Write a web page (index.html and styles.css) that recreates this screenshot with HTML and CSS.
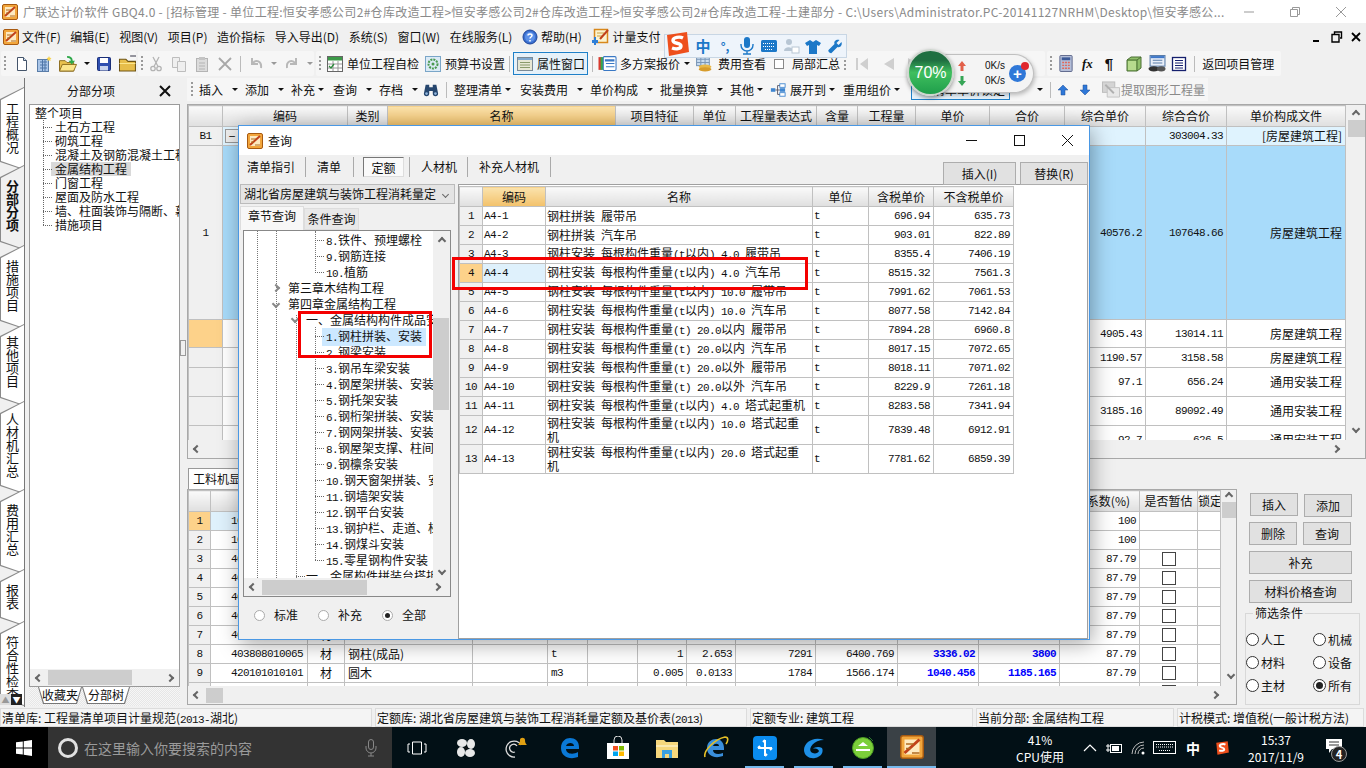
FILE: index.html
```html
<!DOCTYPE html>
<html lang="zh-CN">
<head>
<meta charset="utf-8">
<title>广联达计价软件 GBQ4.0</title>
<link rel="stylesheet" href="styles.css">
</head>
<body>
<svg class="sprite" aria-hidden="true">
  <symbol id="app" viewBox="0 0 16 16"><rect x=".5" y=".5" width="15" height="15" rx="1.5" fill="#f2a63c" stroke="#a85a10"/><rect x="3" y="3" width="10" height="10" fill="#fde9c0"/><path d="M3 12 13 3" stroke="#c1401a" stroke-width="2"/><path d="M4 6h5M4 9h3M8 12h5" stroke="#b06a20"/></symbol>
  <symbol id="doc" viewBox="0 0 16 16"><path d="M3.5 1.5h6l3 3v10h-9z" fill="#fff" stroke="#44546a"/><path d="M9.500 1.500v3h3" fill="#cfe0f2" stroke="#44546a"/></symbol>
  <symbol id="docs" viewBox="0 0 16 16"><rect x="1.500" y="3.500" width="11" height="12" fill="#a9c5e8" stroke="#5a7da8"/><path d="M4 6h7M4 9h7M4 12h7M6.500 4v11M9 4v11" stroke="#4f76a8"/><path d="M13 0l.8 1.700 1.700.3-1.200 1.200.3 1.800-1.600-.8-1.600.8.300-1.800-1.200-1.200 1.700-.3z" fill="#f7d24a"/></symbol>
  <symbol id="open" viewBox="0 0 20 18"><path d="M1 6h6l2 2h7v9H1z" fill="#e9c14e" stroke="#8a6a1c"/><path d="M1 17l3-7h15l-3 7z" fill="#fbe58c" stroke="#8a6a1c"/><path d="M9 1c4 0 6 2 6 5h2.500l-3.500 4-3.500-4H13c0-2-2-3-4-3z" fill="#2fa84a"/></symbol>
  <symbol id="save" viewBox="0 0 16 16"><rect x="1.500" y="1.500" width="13" height="13" rx="1" fill="#2f4fb0" stroke="#1a2f78"/><rect x="4" y="2" width="8" height="5" fill="#fff"/><rect x="4" y="10" width="8" height="4.500" fill="#c9d4ee"/></symbol>
  <symbol id="folder" viewBox="0 0 18 16"><path d="M1 4h6l2 2h7v9H1z" fill="#e7bd4a" stroke="#6e5414"/><path d="M11 1h6v5" fill="none" stroke="#334"/><path d="M1 8h15" stroke="#fbe58c"/></symbol>
  <symbol id="cut" viewBox="0 0 16 16"><g fill="none" stroke="#b4b4b4" stroke-width="1.300"><circle cx="5" cy="12.500" r="2.200"/><circle cx="11" cy="12.500" r="2.200"/><path d="M6 10.500 11 1M10 10.500 5 1"/></g></symbol>
  <symbol id="copy" viewBox="0 0 16 16"><g fill="#efefef" stroke="#bdbdbd"><path d="M1.500 1.500h7v10h-7z"/><path d="M6.500 5.500h8v10h-8z"/></g></symbol>
  <symbol id="paste" viewBox="0 0 16 16"><rect x="2.500" y="2.500" width="11" height="13" fill="#dcdcdc" stroke="#b4b4b4"/><rect x="5" y="1" width="6" height="3" fill="#c4c4c4"/><path d="M5 7h6M5 10h6M5 13h6" stroke="#b4b4b4"/></symbol>
  <symbol id="del" viewBox="0 0 16 16"><path d="M2 2l12 12M14 2 2 14" stroke="#a8a8a8" stroke-width="1.800"/></symbol>
  <symbol id="undo" viewBox="0 0 16 16"><path d="M4 2v6h6M4.500 7.500C8 3 14 5 13 12" fill="none" stroke="#b8b8b8" stroke-width="2"/></symbol>
  <symbol id="redo" viewBox="0 0 16 16"><path d="M12 2v6H6M11.500 7.500C8 3 2 5 3 12" fill="none" stroke="#b8b8b8" stroke-width="2"/></symbol>
  <symbol id="check" viewBox="0 0 16 16"><rect x=".5" y=".5" width="15" height="15" fill="#fff" stroke="#666"/><rect x="1" y="1" width="14" height="3.500" fill="#3c9a48"/><path d="M1 8h14M1 12h14M6 5v10M11 5v10" stroke="#999"/><path d="M2 10l2 2 3-4" stroke="#2a8a3a" fill="none" stroke-width="1.300"/></symbol>
  <symbol id="gear" viewBox="0 0 16 16"><rect x=".5" y=".5" width="15" height="15" fill="#dbeaf6" stroke="#7aa6c8"/><circle cx="8" cy="8" r="4.500" fill="none" stroke="#4a9a50" stroke-width="2" stroke-dasharray="2 1"/><circle cx="8" cy="8" r="1.500" fill="#4a9a50"/></symbol>
  <symbol id="prop" viewBox="0 0 16 16"><rect x=".5" y="1.500" width="15" height="13" fill="#e7e7d4" stroke="#7b8a96"/><rect x="1" y="2" width="14" height="2" fill="#7fa8cf"/><path d="M3 6.500h10M3 9h10M3 11.500h10" stroke="#8a9a6a"/></symbol>
  <symbol id="multi" viewBox="0 0 18 16"><rect x="1" y="2" width="3" height="12" fill="#d93a2e"/><rect x="3" y="2" width="3" height="12" fill="#37a84a"/><rect x="5.500" y="1.500" width="12" height="13" rx="1" fill="#fff" stroke="#3a78c4"/><path d="M7 5h9" stroke="#3a78c4" stroke-width="2"/><path d="M8 8h8M8 11h8" stroke="#3a78c4"/></symbol>
  <symbol id="fee" viewBox="0 0 18 16"><rect x="2" y="1" width="12" height="9" fill="#c9dcf0" stroke="#7c98b8"/><path d="M2 4h12M2 7h12M6 1v9M10 1v9" stroke="#7c98b8"/><ellipse cx="10" cy="11" rx="6" ry="2" fill="#e8b94a"/><ellipse cx="10" cy="13.500" rx="6" ry="2" fill="#d79c2c"/></symbol>
  <symbol id="help" viewBox="0 0 16 16"><circle cx="8" cy="8" r="7" fill="#3a6fd0" stroke="#1c449a"/><circle cx="8" cy="8" r="5" fill="#5c90e8"/><path d="M6 6.500C6 4.500 10 4.500 10 6.500 10 8 8 8 8 9.500M8 11v1.500" fill="none" stroke="#fff" stroke-width="1.500"/></symbol>
  <symbol id="pay" viewBox="0 0 18 18"><rect x="3.500" y="1.500" width="13" height="13" fill="#fbf3cf" stroke="#d8881c" stroke-width="1.500"/><path d="M6 5h7M6 8h6" stroke="#c9a040"/><path d="M9 11 17 2" stroke="#c1401a" stroke-width="2"/><path d="M1 12h6v3H1z" fill="#2f7fd8"/><path d="M4 9v8" stroke="#2f7fd8" stroke-width="2"/></symbol>
  <symbol id="binoc" viewBox="0 0 18 16"><path d="M3 2h4v3h4V2h4l2 10a3 3 0 0 1-6 0V9H7v3a3 3 0 0 1-6 0z" fill="#26466e"/><circle cx="4" cy="12" r="1.500" fill="#8fb4dc"/><circle cx="14" cy="12" r="1.500" fill="#8fb4dc"/></symbol>
  <symbol id="tree" viewBox="0 0 18 16"><rect x="1" y="6" width="5" height="4" fill="#3f86d0"/><rect x="11" y="1" width="6" height="4" fill="#fff" stroke="#3f86d0"/><rect x="11" y="6" width="6" height="4" fill="#3f86d0"/><rect x="11" y="11" width="6" height="4" fill="#fff" stroke="#3f86d0"/><path d="M6 8h5M8.500 3v10h2.500M8.500 3h2.500" fill="none" stroke="#556"/></symbol>
  <symbol id="up" viewBox="0 0 12 12"><path d="M6 1 11 6H8v5H4V6H1z" fill="#2f78d8" stroke="#1c4c96" stroke-width=".5"/></symbol>
  <symbol id="down" viewBox="0 0 12 12"><path d="M6 11 11 6H8V1H4v5H1z" fill="#2f78d8" stroke="#1c4c96" stroke-width=".5"/></symbol>
  <symbol id="extract" viewBox="0 0 20 18"><rect x="1" y="1" width="13" height="11" fill="#d4d4d4" stroke="#bbb"/><path d="M6 7h13v10H6z" fill="#e8e8e8" stroke="#c4c4c4"/><path d="M4 4l9 9" stroke="#b0b0b0" stroke-width="2"/></symbol>
  <symbol id="calc" viewBox="0 0 14 18"><rect x=".5" y=".5" width="13" height="17" rx="1" fill="#b4bed8" stroke="#5a6488"/><rect x="2.500" y="2.500" width="9" height="3" fill="#3d5a98"/><path d="M3 8h2M6 8h2M9 8h2M3 11h2M6 11h2M9 11h2M3 14h2M6 14h2M9 14h2" stroke="#e0685a" stroke-width="1.500"/></symbol>
  <symbol id="cube" viewBox="0 0 16 16"><path d="M1 4l4-3h10v11l-4 3H1z" fill="#8fbf6a" stroke="#4b6f33"/><path d="M1 4h10v11M11 4l4-3" fill="none" stroke="#4b6f33"/><rect x="2" y="5" width="8" height="9" fill="#b7db8e"/></symbol>
  <symbol id="screen" viewBox="0 0 18 16"><rect x="2.500" y=".5" width="14" height="10" fill="#e8eef8" stroke="#5a7da8"/><rect x="3" y="1" width="13" height="2" fill="#3f78c8"/><path d="M5 5h9M5 7.500h9" stroke="#5a7da8"/><ellipse cx="6" cy="13" rx="5" ry="2.500" fill="#333"/><ellipse cx="13" cy="13" rx="4" ry="2.500" fill="#555"/></symbol>
  <symbol id="list" viewBox="0 0 16 16"><rect x="1.500" y="1.500" width="13" height="13" fill="#fff" stroke="#16206e" stroke-width="1.300"/><path d="M4 4.500h8M4 7h8M4 9.500h8M4 12h8" stroke="#16206e"/></symbol>
  <symbol id="sogou" viewBox="0 0 28 28"><path d="M4 5 24 2l2 20-20 4z" fill="#ee4f1c"/><path d="M20 8c-3-1.500-10-1-10 2.500 0 3.500 8 2 8 5.500 0 3-5 3.500-9 2" fill="none" stroke="#fff" stroke-width="3.400"/></symbol>
  <symbol id="win" viewBox="0 0 16 16"><path d="M0 2.300 6.800 1.400V7.600H0zM7.700 1.300 16 0V7.600H7.700zM0 8.400H6.800V14.600L0 13.700zM7.700 8.400H16V16L7.700 14.800z" fill="#fff"/></symbol>
</svg>

<div class="app">
  <header class="titlebar">
    <svg class="ic16"><use href="#app"/></svg>
    <div class="title-text">广联达计价软件 GBQ4.0 - [招标管理 - 单位工程:恒安孝感公司2#仓库改造工程&gt;恒安孝感公司2#仓库改造工程&gt;恒安孝感公司2#仓库改造工程-土建部分 - C:\Users\Administrator.PC-20141127NRHM\Desktop\恒安孝感公...</div>
    <div class="wincaps">
      <svg width="12" height="12" viewBox="0 0 12 12"><path d="M1 6h10" stroke="#999"/></svg>
      <svg width="12" height="12" viewBox="0 0 12 12"><path d="M3.500 3V1.500h7v7H9M1.500 3.500h7v7h-7z" fill="none" stroke="#999"/></svg>
      <svg width="12" height="12" viewBox="0 0 12 12"><path d="M1 1l10 10M11 1 1 11" stroke="#999"/></svg>
    </div>
  </header>

  <nav class="menubar">
    <svg class="ic16 menu-logo"><use href="#app"/></svg>
    <span class="mi">文件(F)</span><span class="mi">编辑(E)</span><span class="mi">视图(V)</span><span class="mi">项目(P)</span><span class="mi">造价指标</span><span class="mi">导入导出(D)</span><span class="mi">系统(S)</span><span class="mi">窗口(W)</span><span class="mi">在线服务(L)</span>
    <svg class="ic16"><use href="#help"/></svg><span class="mi">帮助(H)</span>
    <svg class="ic18"><use href="#pay"/></svg><span class="mi">计量支付</span>
    <div class="mdi-caps">
      <svg width="12" height="12" viewBox="0 0 12 12"><path d="M1 10h6" stroke="#000" stroke-width="2"/></svg>
      <svg width="12" height="12" viewBox="0 0 12 12"><path d="M3.500 3V1h7v6H9M1 3.500h7V11H1z" fill="none" stroke="#000" stroke-width="1.400"/></svg>
      <svg width="12" height="12" viewBox="0 0 12 12"><path d="M2 2l8 8M10 2l-8 8" stroke="#000" stroke-width="1.800"/></svg>
    </div>
  </nav>

  <div class="toolbar1">
    <div class="seg seg-a"><i class="grip"></i>
      <svg class="ic16"><use href="#doc"/></svg><svg class="ic16"><use href="#docs"/></svg><svg class="ic-open"><use href="#open"/></svg><i class="caret"></i><svg class="ic16"><use href="#save"/></svg><svg class="ic-open"><use href="#folder"/></svg>
    </div>
    <div class="seg seg-b"><i class="grip"></i>
      <svg class="ic16"><use href="#cut"/></svg><svg class="ic16"><use href="#copy"/></svg><svg class="ic16"><use href="#paste"/></svg><svg class="ic16"><use href="#del"/></svg><i class="sep"></i><svg class="ic16"><use href="#undo"/></svg><i class="caret gray"></i><svg class="ic16"><use href="#redo"/></svg><i class="caret gray"></i>
    </div>
    <div class="seg seg-c"><i class="grip"></i>
      <svg class="ic16"><use href="#check"/></svg><span class="t">单位工程自检</span>
      <svg class="ic16 gear"><use href="#gear"/></svg><span class="t">预算书设置</span><i class="sep"></i>
      <span class="prop-on"><svg class="ic16"><use href="#prop"/></svg><span class="t">属性窗口</span></span><i class="sep"></i>
      <svg class="ic-open multi"><use href="#multi"/></svg><span class="t">多方案报价</span><i class="caret"></i>
      <svg class="ic-open"><use href="#fee"/></svg><span class="t">费用查看</span><i class="cb-mini"></i><span class="t">局部汇总</span><i class="grip"></i>
      <svg class="navs" width="66" height="14" viewBox="0 0 66 14"><path d="M2 1h2v12H2zM14 1v12L6 7zM40 1v12L30 7zM54 1v12l10-6z" fill="#cfcfcf"/></svg>
    </div>
    <div class="seg seg-d"><i class="grip"></i>
      <svg class="ic-calc"><use href="#calc"/></svg><span class="fx">fx</span><span class="pil">¶</span><svg class="ic16"><use href="#cube"/></svg><svg class="ic-open screen"><use href="#screen"/></svg><svg class="ic16 lst"><use href="#list"/></svg><i class="sep"></i><span class="t back">返回项目管理</span>
    </div>
  </div>

  <div class="main">
    <div class="rail">
      <div class="vtab h83"><span>工程概况</span></div>
      <div class="vtab h85 on"><span>分部分项</span></div>
      <div class="vtab h84"><span>措施项目</span></div>
      <div class="vtab h82 p12"><span>其他项目</span></div>
      <div class="vtab h93 p12"><span>人材机汇总</span></div>
      <div class="vtab h85"><span>费用汇总</span></div>
      <div class="vtab h57"><span>报表</span></div>
      <div class="vtab h85"><span>符合性检查</span></div>
      <div class="rail-arrows"><b class="ra off">▲</b><b class="ra">▼</b></div>
    </div>

    <aside class="side">
      <div class="side-head"><span>分部分项</span><svg width="12" height="12" viewBox="0 0 12 12"><path d="M1 1l10 10M11 1 1 11" stroke="#111" stroke-width="2"/></svg></div>
      <div class="side-box">
        <div class="side-tree">
          <div class="st root">整个项目</div>
          <div class="st">土石方工程</div>
          <div class="st">砌筑工程</div>
          <div class="st">混凝土及钢筋混凝土工程</div>
          <div class="st"><span class="st-sel">金属结构工程</span></div>
          <div class="st">门窗工程</div>
          <div class="st">屋面及防水工程</div>
          <div class="st">墙、柱面装饰与隔断、幕墙工程</div>
          <div class="st">措施项目</div>
        </div>
        <div class="hs side-hs"><i class="chev l"></i><i class="thumb th-side"></i><i class="chev r"></i></div>
      </div>
      <div class="side-tabs"><span class="stab s44"><span>收藏夹</span></span><span class="stab s48"><span>分部树</span></span></div>
    </aside>

    <div class="splitter"><i></i></div>

    <div class="work">
      <div class="toolbar2"><i class="grip"></i>
        <span class="ti w46">插入<i class="caret"></i></span><span class="ti w46">添加<i class="caret"></i></span><span class="ti w42 tight">补充<i class="caret"></i></span><span class="ti w46">查询<i class="caret"></i></span><span class="ti w44">存档<i class="caret"></i></span>
        <svg class="ic16"><use href="#binoc"/></svg><i class="sep sep2"></i>
        <span class="ti w66 tight">整理清单<i class="caret"></i></span><span class="ti w70">安装费用<i class="caret"></i></span><span class="ti w70">单价构成<i class="caret"></i></span><span class="ti w70">批量换算<i class="caret"></i></span><span class="ti w40 tight">其他<i class="caret"></i></span>
        <svg class="ic16 treeic"><use href="#tree"/></svg><span class="ti w53 tight">展开到<i class="caret"></i></span><span class="ti w68 tight">重用组价<i class="caret"></i></span>
        <span class="lockbox">清单单价锁定</span><i class="caret c-wide"></i><i class="sep"></i>
        <svg class="ic-arrow"><use href="#up"/></svg><svg class="ic-arrow"><use href="#down"/></svg>
        <svg class="ic-open"><use href="#extract"/></svg><span class="t gray-t">提取图形工程量</span>
      </div>

      <div class="upper">
        <div class="grid-area">
          <table class="grid g-main">
            <colgroup><col class="c34"><col class="c125"><col class="c40"><col class="c228"><col class="c78"><col class="c42"><col class="c81"><col class="c41"><col class="c58"><col class="c74"><col class="c75"><col class="c81"><col class="c81"><col class="c119"></colgroup>
            <thead><tr><th></th><th>编码</th><th>类别</th><th class="hot">名称</th><th>项目特征</th><th>单位</th><th>工程量表达式</th><th>含量</th><th>工程量</th><th>单价</th><th>合价</th><th>综合单价</th><th>综合合价</th><th>单价构成文件</th></tr></thead>
            <tbody>
              <tr class="r19 tint"><td class="rh n">B1</td><td class="nw"><i class="pm">−</i></td><td></td><td></td><td></td><td></td><td></td><td></td><td></td><td></td><td></td><td></td><td class="n ra-t">303004.33</td><td class="ra-t">[房屋建筑工程]</td></tr>
              <tr class="r174 sel"><td class="rh n">1</td><td></td><td></td><td></td><td></td><td></td><td></td><td></td><td></td><td></td><td></td><td class="n ra-t">40576.2</td><td class="n ra-t">107648.66</td><td class="ra-t">房屋建筑工程</td></tr>
              <tr class="r28"><td class="rh hotrow"></td><td></td><td></td><td></td><td></td><td></td><td></td><td></td><td></td><td></td><td></td><td class="n ra-t">4905.43</td><td class="n ra-t">13014.11</td><td class="ra-t">房屋建筑工程</td></tr>
              <tr class="r20"><td class="rh"></td><td></td><td></td><td></td><td></td><td></td><td></td><td></td><td></td><td></td><td></td><td class="n ra-t">1190.57</td><td class="n ra-t">3158.58</td><td class="ra-t">房屋建筑工程</td></tr>
              <tr class="r29"><td class="rh"></td><td></td><td></td><td></td><td></td><td></td><td></td><td></td><td></td><td></td><td></td><td class="n ra-t">97.1</td><td class="n ra-t">656.24</td><td class="ra-t">通用安装工程</td></tr>
              <tr class="r29"><td class="rh"></td><td></td><td></td><td></td><td></td><td></td><td></td><td></td><td></td><td></td><td></td><td class="n ra-t">3185.16</td><td class="n ra-t">89092.49</td><td class="ra-t">通用安装工程</td></tr>
              <tr class="r29"><td class="rh"></td><td></td><td></td><td></td><td></td><td></td><td></td><td></td><td></td><td></td><td></td><td class="n ra-t">92.7</td><td class="n ra-t">626.5</td><td class="ra-t">通用安装工程</td></tr>
            </tbody>
          </table>
          <div class="vs vs-main"><i class="chev u"></i><i class="thumb th-main"></i><i class="chev d"></i></div>
        </div>
        <div class="hs main-hs"><i class="chev l"></i><i class="chev r"></i></div>
      </div>

      <div class="lower-tabs"><span class="ltab">工料机显示</span></div>

      <div class="lower">
        <div class="lower-box">
          <div class="grid-area lower-area">
            <table class="grid g-low">
              <colgroup><col class="c22"><col class="c97"><col class="c37"><col class="c128"><col class="c75"><col class="c40"><col class="c50"><col class="c49"><col class="c49"><col class="c80"><col class="c82"><col class="c81"><col class="c81"><col class="c80"><col class="c58"><col class="c23"></colgroup>
              <thead><tr><th></th><th></th><th></th><th></th><th></th><th></th><th></th><th></th><th></th><th></th><th></th><th></th><th></th><th class="ra-h">系数(%)</th><th>是否暂估</th><th class="clip">锁定</th></tr></thead>
              <tbody>
                <tr class="low"><td class="rh hotrow n">1</td><td class="code n tintcell">10</td><td></td><td></td><td></td><td></td><td></td><td></td><td></td><td></td><td></td><td></td><td></td><td class="n ra-t">100</td><td></td><td></td></tr>
                <tr class="low"><td class="rh n">2</td><td class="code n">10</td><td></td><td></td><td></td><td></td><td></td><td></td><td></td><td></td><td></td><td></td><td></td><td class="n ra-t">100</td><td></td><td></td></tr>
                <tr class="low"><td class="rh n">3</td><td class="code n">40</td><td></td><td></td><td></td><td></td><td></td><td></td><td></td><td></td><td></td><td></td><td></td><td class="n ra-t">87.79</td><td class="ct"><i class="cb"></i></td><td></td></tr>
                <tr class="low"><td class="rh n">4</td><td class="code n">40</td><td></td><td></td><td></td><td></td><td></td><td></td><td></td><td></td><td></td><td></td><td></td><td class="n ra-t">87.79</td><td class="ct"><i class="cb"></i></td><td></td></tr>
                <tr class="low"><td class="rh n">5</td><td class="code n">40</td><td></td><td></td><td></td><td></td><td></td><td></td><td></td><td></td><td></td><td></td><td></td><td class="n ra-t">87.79</td><td class="ct"><i class="cb"></i></td><td></td></tr>
                <tr class="low"><td class="rh n">6</td><td class="code n">40</td><td></td><td></td><td></td><td></td><td></td><td></td><td></td><td></td><td></td><td></td><td></td><td class="n ra-t">87.79</td><td class="ct"><i class="cb"></i></td><td></td></tr>
                <tr class="low"><td class="rh n">7</td><td class="code n">40</td><td class="ct">材</td><td></td><td></td><td></td><td></td><td></td><td></td><td></td><td></td><td></td><td></td><td class="n ra-t">87.79</td><td class="ct"><i class="cb"></i></td><td></td></tr>
                <tr class="low"><td class="rh n">8</td><td class="code n">403808010065</td><td class="ct">材</td><td>钢柱(成品)</td><td></td><td class="n">t</td><td></td><td class="n ra-t">1</td><td class="n ra-t">2.653</td><td class="n ra-t">7291</td><td class="n ra-t">6400.769</td><td class="n ra-t blue">3336.02</td><td class="n ra-t blue">3800</td><td class="n ra-t">87.79</td><td class="ct"><i class="cb"></i></td><td></td></tr>
                <tr class="low"><td class="rh n">9</td><td class="code n">420101010101</td><td class="ct">材</td><td>圆木</td><td></td><td class="n">m3</td><td></td><td class="n ra-t">0.005</td><td class="n ra-t">0.0133</td><td class="n ra-t">1784</td><td class="n ra-t">1566.174</td><td class="n ra-t blue">1040.456</td><td class="n ra-t blue">1185.165</td><td class="n ra-t">87.79</td><td class="ct"><i class="cb"></i></td><td></td></tr>
                <tr class="low"><td class="rh"></td><td></td><td class="ct">材</td><td>混凝土</td><td></td><td></td><td></td><td></td><td></td><td></td><td></td><td></td><td></td><td></td><td class="ct"><i class="cb"></i></td><td></td></tr>
              </tbody>
            </table>
            <div class="vs vs-low"><i class="chev u"></i><i class="thumb th-low"></i><i class="chev d"></i></div>
          </div>
          <div class="hs low-hs"><i class="chev l"></i><i class="thumb th-lowh"></i><i class="chev r"></i></div>
        </div>

        <div class="actions">
          <div class="btn-row first"><button class="btn half">插入</button><button class="btn half">添加</button></div>
          <div class="btn-row"><button class="btn half">删除</button><button class="btn half">查询</button></div>
          <button class="btn wide">补充</button>
          <button class="btn wide">材料价格查询</button>
          <fieldset class="filter">
            <legend>筛选条件</legend>
            <label class="rad"><i class="dot"></i>人工</label><label class="rad"><i class="dot"></i>机械</label>
            <label class="rad"><i class="dot"></i>材料</label><label class="rad"><i class="dot"></i>设备</label>
            <label class="rad"><i class="dot"></i>主材</label><label class="rad"><i class="dot on"></i>所有</label>
          </fieldset>
        </div>
      </div>
    </div>
  </div>

  <footer class="status">
    <div class="sc s1">清单库: 工程量清单项目计量规范(<span class="n">2013-</span>湖北)</div>
    <div class="sc s2">定额库: 湖北省房屋建筑与装饰工程消耗量定额及基价表(<span class="n">2013</span>)</div>
    <div class="sc s3">定额专业: 建筑工程</div>
    <div class="sc s4">当前分部: 金属结构工程</div>
    <div class="sc s5">计税模式: 增值税(一般计税方法)</div>
  </footer>

  <div class="taskbar">
    <div class="start"><svg width="16" height="16"><use href="#win"/></svg></div>
    <div class="search"><i class="cortana"></i><span class="search-t">在这里输入你要搜索的内容</span>
      <svg class="mic" width="12" height="18" viewBox="0 0 12 18"><rect x="3.500" y=".5" width="5" height="10" rx="2.500" fill="none" stroke="#888"/><path d="M1 7v2a5 5 0 0 0 10 0V7M6 14v3M3 17h6" fill="none" stroke="#888"/></svg>
    </div>
    <div class="tk"><svg width="20" height="14" viewBox="0 0 20 14"><path d="M5.500 1h9v12h-9zM3 3H1v8h2M17 3h2v8h-2" fill="none" stroke="#fff"/></svg></div>
    <div class="tk"><svg width="22" height="22" viewBox="0 0 22 22"><g fill="#e8e8e8"><ellipse cx="7" cy="6" rx="5" ry="4"/><ellipse cx="16" cy="7" rx="4" ry="5"/><ellipse cx="15" cy="16" rx="5" ry="4"/><ellipse cx="6" cy="15" rx="4" ry="5"/></g><circle cx="11" cy="11" r="1.500" fill="#111"/></svg></div>
    <div class="tk"><svg width="28" height="26" viewBox="0 0 28 26"><path d="M20 10A8 8 0 1 0 14 22M16 11a4 4 0 1 0-2 6" fill="none" stroke="#ddd" stroke-width="1.300"/><path d="M19 5c0-3 5-3 5 0 0 3 1 4 2 5H17c1-1 2-2 2-5z" fill="#e0a012"/></svg></div>
    <div class="tk gap5"><svg width="22" height="22" viewBox="0 0 22 22"><path d="M3 11C3 4 8 1 12 1c5 0 9 3 9 9v2H8c0 5 7 6 12 3v5c-8 3-17 0-17-9zm5-2h8c0-4-7-4-8 0z" fill="#0a78d6"/></svg></div>
    <div class="tk"><svg width="24" height="24" viewBox="0 0 24 24"><path d="M1 7h22v16H1z" fill="#fff"/><path d="M8 7V4a4 4 0 0 1 8 0v3" fill="none" stroke="#ddd"/><rect x="7" y="10" width="5" height="4.500" fill="#f25022"/><rect x="13" y="10" width="5" height="4.500" fill="#7fba00"/><rect x="7" y="15.500" width="5" height="4.500" fill="#00a4ef"/><rect x="13" y="15.500" width="5" height="4.500" fill="#ffb900"/></svg></div>
    <div class="tk"><svg width="24" height="22" viewBox="0 0 24 22"><path d="M1 3h8l2 2h12v16H1z" fill="#f6d77c"/><path d="M1 8h22v2H1z" fill="#fbe9b0"/><path d="M7 13h10v8h-3v-4h-4v4H7z" fill="#3aa0e0"/></svg></div>
    <div class="tk"><svg width="26" height="26" viewBox="0 0 26 26"><path d="M4 13C4 7 9 4 13 4c5 0 8 4 8 9v2H10c0 4 5 5 10 3v3c-8 3-16 0-16-8zm6-2h6c0-3-5-3-6 0z" fill="#3a8fdc"/><path d="M2 22C0 16 12 4 22 2c4 0 3 4 1 7" fill="none" stroke="#e6c027" stroke-width="1.600"/></svg></div>
    <div class="tk run"><svg width="24" height="24" viewBox="0 0 24 24"><rect width="24" height="24" rx="4" fill="#0a8cf0"/><path d="M12 4v16M5 12h14M12 4l-2 2M12 20l2-2M5 12l2-2M19 12l-2 2" stroke="#fff" stroke-width="2" fill="none"/></svg></div>
    <div class="tk run"><svg width="24" height="24" viewBox="0 0 24 24"><path d="M22 4C12 0 2 6 2 14c0 6 6 9 11 8 6-1 9-6 7-10-3-2-8-1-9 1 3-1 5 0 6 2-1 3-6 3-8 1-3-4 3-12 13-12z" fill="#1e90e8"/></svg></div>
    <div class="tk run"><svg width="24" height="24" viewBox="0 0 24 24"><circle cx="12" cy="12" r="10.500" fill="#7ccf3a" stroke="#4a9a22"/><path d="M5 13h14v2H5zM7 10l5-4 5 4z" fill="#fff"/><path d="M18 1l4 4" stroke="#2a7a2a"/></svg></div>
    <div class="tk active"><svg width="24" height="24"><use href="#app"/></svg></div>
    <div class="tray">
      <div class="cpu"><span>41%</span><span>CPU使用</span></div>
      <svg width="14" height="8" viewBox="0 0 14 8"><path d="M1 7l6-6 6 6" fill="none" stroke="#fff" stroke-width="1.200"/></svg>
      <svg width="18" height="12" viewBox="0 0 18 12"><rect x="5.500" y="2.500" width="11" height="8" fill="none" stroke="#fff"/><rect x="7" y="4" width="7" height="5" fill="#fff"/><path d="M1 4h4M1 8h4M3 2v8" stroke="#fff"/></svg>
      <svg width="14" height="14" viewBox="0 0 14 14"><path d="M1 13a12 12 0 0 1 12-12M4 13a9 9 0 0 1 9-9M7 13a6 6 0 0 1 6-6" fill="none" stroke="#bbb"/><circle cx="12" cy="12" r="1.500" fill="#fff"/></svg>
      <svg width="23" height="13" viewBox="0 0 23 13"><rect x=".5" y=".5" width="22" height="12" fill="none" stroke="#fff"/><path d="M3 3.500h17M3 6h17M6 9.500h11" stroke="#fff" stroke-dasharray="1 1"/></svg>
      <span class="tray-zh">中</span>
      <svg class="tray-s" width="16" height="16"><use href="#sogou"/></svg>
      <div class="clock"><span>15:37</span><span>2017/11/9</span></div>
      <div class="notif"><svg width="18" height="16" viewBox="0 0 18 16"><path d="M1 1h16v10H7l-3 4v-4H1z" fill="#fff"/><path d="M4 4h10M4 7h10" stroke="#333"/></svg><b class="badge">4</b></div>
    </div>
  </div>
</div>

<!-- floating IME bar -->
<div class="ime">
  <svg class="ime-s" width="28" height="28"><use href="#sogou"/></svg>
  <span class="ime-zh">中</span>
  <span class="ime-pt">°,</span>
  <svg width="14" height="18" viewBox="0 0 14 18"><rect x="4" y="0" width="6" height="11" rx="3" fill="#1c78c8"/><path d="M1 7v1a6 6 0 0 0 12 0V7M7 14v3M3 17h8" fill="none" stroke="#1c78c8" stroke-width="1.400"/></svg>
  <svg width="16" height="12" viewBox="0 0 16 12"><rect width="16" height="12" rx="1.500" fill="#1c78c8"/><path d="M2 3.500h12M2 6.500h12M4 9.500h8" stroke="#fff" stroke-dasharray="1 1"/></svg>
  <svg width="16" height="16" viewBox="0 0 16 16"><circle cx="6" cy="4" r="3" fill="#b8c6d4"/><path d="M1 13c0-5 9-5 9 0z" fill="#b8c6d4"/><rect x="9" y="9" width="7" height="6" fill="#fff" stroke="#b8c6d4"/></svg>
  <svg width="16" height="15" viewBox="0 0 16 15"><path d="M5 1 0 4l2 3 2-1v9h8V6l2 1 2-3-5-3-3 2z" fill="#1c78c8"/></svg>
  <svg width="15" height="15" viewBox="0 0 15 15"><path d="M14 3l-3 3-2-2 3-3C9 0 6 2 7 5L1 11c-1 1 2 4 3 3l6-6c3 1 5-2 4-5z" fill="#1c78c8"/></svg>
</div>

<!-- floating network widget -->
<div class="meter">
  <div class="gauge"><span>70%</span></div>
  <div class="rates">
    <div class="rate"><svg width="10" height="12" viewBox="0 0 10 12"><path d="M5 1 9 6H6.500v5h-3V6H1z" fill="#e2604a"/></svg><span>0K/s</span></div>
    <div class="rate"><svg width="10" height="12" viewBox="0 0 10 12"><path d="M5 11 9 6H6.500V1h-3v5H1z" fill="#36a556"/></svg><span>0K/s</span></div>
  </div>
  <div class="plus">+<i class="reddot"></i></div>
</div>

<!-- query dialog -->
<section class="dialog">
  <div class="dlg-title">
    <svg class="ic16"><use href="#app"/></svg><span class="dlg-name">查询</span>
    <div class="dlg-caps">
      <svg width="11" height="11" viewBox="0 0 11 11"><path d="M0 5.500h11" stroke="#111"/></svg>
      <svg width="11" height="11" viewBox="0 0 11 11"><rect x=".5" y=".5" width="10" height="10" fill="none" stroke="#111"/></svg>
      <svg width="11" height="11" viewBox="0 0 11 11"><path d="M0 0l11 11M11 0 0 11" stroke="#111"/></svg>
    </div>
  </div>
  <div class="dlg-tabs">
    <span class="dt-t t-a">清单指引</span><span class="dt-t t-b">清单</span><span class="dt-t on">定额</span><span class="dt-t t-c">人材机</span><span class="dt-t t-d">补充人材机</span>
    <div class="dlg-btns"><button class="btn dbtn">插入(I)</button><button class="btn dbtn">替换(R)</button></div>
  </div>
  <div class="dlg-body">
    <div class="dlg-left">
      <div class="combo"><span>湖北省房屋建筑与装饰工程消耗量定</span><i class="chev d"></i></div>
      <div class="pagetabs"><span class="pt on">章节查询</span><span class="pt">条件查询</span></div>
      <div class="tree-box">
        <div class="tree-scroll">
          <div class="tree-list">
            <i class="vl v1"></i><i class="vl v2"></i><i class="vl v3"></i><i class="vl v4"></i><i class="vl v5"></i>
            <div class="dr leaf"><span class="n">8.</span>铁件、预埋螺栓</div>
            <div class="dr leaf"><span class="n">9.</span>钢筋连接</div>
            <div class="dr leaf"><span class="n">10.</span>植筋</div>
            <div class="dr chap"><i class="chev r tw"></i>第三章木结构工程</div>
            <div class="dr chap"><i class="chev d tw"></i>第四章金属结构工程</div>
            <div class="dr sec"><i class="chev d tw"></i>一、金属结构构件成品安装</div>
            <div class="dr leaf"><span class="picked"><span class="n">1.</span>钢柱拼装、安装</span></div>
            <div class="dr leaf"><span class="n">2.</span>钢梁安装</div>
            <div class="dr leaf"><span class="n">3.</span>钢吊车梁安装</div>
            <div class="dr leaf"><span class="n">4.</span>钢屋架拼装、安装</div>
            <div class="dr leaf"><span class="n">5.</span>钢托架安装</div>
            <div class="dr leaf"><span class="n">6.</span>钢桁架拼装、安装</div>
            <div class="dr leaf"><span class="n">7.</span>钢网架拼装、安装</div>
            <div class="dr leaf"><span class="n">8.</span>钢屋架支撑、柱间支撑</div>
            <div class="dr leaf"><span class="n">9.</span>钢檩条安装</div>
            <div class="dr leaf"><span class="n">10.</span>钢天窗架拼装、安装</div>
            <div class="dr leaf"><span class="n">11.</span>钢墙架安装</div>
            <div class="dr leaf"><span class="n">12.</span>钢平台安装</div>
            <div class="dr leaf"><span class="n">13.</span>钢护栏、走道、梯子</div>
            <div class="dr leaf"><span class="n">14.</span>钢煤斗安装</div>
            <div class="dr leaf"><span class="n">15.</span>零星钢构件安装</div>
            <div class="dr sec2">一、金属构件拼装台搭拆</div>
          </div>
          <div class="vs vs-tree"><i class="chev u"></i><i class="thumb th-tree"></i><i class="chev d"></i></div>
        </div>
        <div class="hs tree-hs"><i class="chev l"></i><i class="thumb th-treeh"></i><i class="chev r"></i></div>
      </div>
      <div class="dlg-radios">
        <label class="rad2"><i class="dot soft"></i>标准</label><label class="rad2"><i class="dot soft"></i>补充</label><label class="rad2"><i class="dot soft on"></i>全部</label>
      </div>
    </div>
    <div class="dlg-right">
      <table class="grid g-dlg">
        <colgroup><col class="c23"><col class="c63"><col class="c267"><col class="c56"><col class="c65"><col class="c80"></colgroup>
        <thead><tr><th></th><th class="hot">编码</th><th>名称</th><th>单位</th><th>含税单价</th><th>不含税单价</th></tr></thead>
        <tbody>
          <tr><td class="rh n">1</td><td class="n">A4-1</td><td>钢柱拼装 履带吊</td><td class="n">t</td><td class="n ra-t">696.94</td><td class="n ra-t">635.73</td></tr>
          <tr><td class="rh n">2</td><td class="n">A4-2</td><td>钢柱拼装 汽车吊</td><td class="n">t</td><td class="n ra-t">903.01</td><td class="n ra-t">822.89</td></tr>
          <tr><td class="rh n">3</td><td class="n">A4-3</td><td>钢柱安装 每根构件重量<span class="n">(t</span>以内<span class="n">) 4.0 </span>履带吊</td><td class="n">t</td><td class="n ra-t">8355.4</td><td class="n ra-t">7406.19</td></tr>
          <tr class="cur"><td class="rh hotrow n">4</td><td class="n tintcell">A4-4</td><td>钢柱安装 每根构件重量<span class="n">(t</span>以内<span class="n">) 4.0 </span>汽车吊</td><td class="n">t</td><td class="n ra-t">8515.32</td><td class="n ra-t">7561.3</td></tr>
          <tr><td class="rh n">5</td><td class="n">A4-5</td><td>钢柱安装 每根构件重量<span class="n">(t</span>以内<span class="n">) 10.0 </span>履带吊</td><td class="n">t</td><td class="n ra-t">7991.62</td><td class="n ra-t">7061.53</td></tr>
          <tr><td class="rh n">6</td><td class="n">A4-6</td><td>钢柱安装 每根构件重量<span class="n">(t</span>以内<span class="n">) 10.0 </span>汽车吊</td><td class="n">t</td><td class="n ra-t">8077.58</td><td class="n ra-t">7142.84</td></tr>
          <tr><td class="rh n">7</td><td class="n">A4-7</td><td>钢柱安装 每根构件重量<span class="n">(t) 20.0</span>以内 履带吊</td><td class="n">t</td><td class="n ra-t">7894.28</td><td class="n ra-t">6960.8</td></tr>
          <tr><td class="rh n">8</td><td class="n">A4-8</td><td>钢柱安装 每根构件重量<span class="n">(t) 20.0</span>以内 汽车吊</td><td class="n">t</td><td class="n ra-t">8017.15</td><td class="n ra-t">7072.65</td></tr>
          <tr><td class="rh n">9</td><td class="n">A4-9</td><td>钢柱安装 每根构件重量<span class="n">(t) 20.0</span>以外 履带吊</td><td class="n">t</td><td class="n ra-t">8018.11</td><td class="n ra-t">7071.02</td></tr>
          <tr><td class="rh n">10</td><td class="n">A4-10</td><td>钢柱安装 每根构件重量<span class="n">(t) 20.0</span>以外 汽车吊</td><td class="n">t</td><td class="n ra-t">8229.9</td><td class="n ra-t">7261.18</td></tr>
          <tr><td class="rh n">11</td><td class="n">A4-11</td><td>钢柱安装 每根构件重量<span class="n">(t</span>以内<span class="n">) 4.0 </span>塔式起重机</td><td class="n">t</td><td class="n ra-t">8283.58</td><td class="n ra-t">7341.94</td></tr>
          <tr class="tall"><td class="rh n">12</td><td class="n">A4-12</td><td class="wrap">钢柱安装 每根构件重量<span class="n">(t</span>以内<span class="n">) 10.0 </span>塔式起重机</td><td class="n">t</td><td class="n ra-t">7839.48</td><td class="n ra-t">6912.91</td></tr>
          <tr class="tall"><td class="rh n">13</td><td class="n">A4-13</td><td class="wrap">钢柱安装 每根构件重量<span class="n">(t</span>以内<span class="n">) 20.0 </span>塔式起重机</td><td class="n">t</td><td class="n ra-t">7781.62</td><td class="n ra-t">6859.39</td></tr>
        </tbody>
      </table>
    </div>
  </div>
</section>

<div class="redbox rb-tree"></div>
<div class="redbox rb-row"></div>
</body>
</html>
```
FILE: styles.css
```css
* { box-sizing: border-box; }
html, body { margin: 0; padding: 0; width: 1366px; height: 768px; overflow: hidden; }
body { position: relative; background: #f0f0f0; color: #111; font: 12px/16px "Noto Sans CJK SC", "Liberation Sans", sans-serif; }
i { font-style: normal; }
.sprite { position: absolute; width: 0; height: 0; }
.ic16 { width: 16px; height: 16px; flex: none; }
.ic18 { width: 18px; height: 18px; flex: none; }
.ic-open { width: 20px; height: 17px; flex: none; }
.ic-calc { width: 14px; height: 17px; flex: none; }
.ic-arrow { width: 12px; height: 12px; flex: none; }
.n { font-family: "Liberation Mono", monospace; font-size: 11px; letter-spacing: -.6px; word-spacing: 0; }

.app { width: 1366px; height: 768px; display: flex; flex-direction: column; }

/* title + menu */
.titlebar { height: 23px; background: #fff; display: flex; align-items: center; padding-left: 2px; gap: 5px; flex: none; }
.title-text { color: #8a8a8a; font-size: 12px; white-space: nowrap; width: 1210px; overflow: hidden; letter-spacing: .3px; }
.wincaps { margin-left: auto; display: flex; gap: 34px; padding-right: 19px; }
.menubar { height: 27px; display: flex; align-items: center; padding-left: 3px; flex: none; }
.menubar .menu-logo { margin-right: 5px; }
.mi { margin-right: 9.6px; white-space: nowrap; }
.menubar .ic16, .menubar .ic18 { margin-right: 3px; }
.mdi-caps { margin-left: auto; display: flex; gap: 7px; padding-right: 4px; }

/* toolbars */
.toolbar1 { height: 28px; display: flex; gap: 2px; padding: 1px 0 2px 1px; flex: none; }
.seg { background: #f6f6f6; display: flex; align-items: center; border-radius: 2px; gap: 6px; padding-left: 3px; overflow: hidden; }
.seg-a { width: 135px; }
.seg-b { width: 176px; gap: 7px; }
.seg-b > .grip { margin-right: -2px; }
.seg-c { width: 729px; gap: 4px; }
.seg-d { width: 234px; gap: 9px; }
.grip { width: 2px; height: 16px; flex: none; background: repeating-linear-gradient(#9a9a9a 0 2px, transparent 2px 4px); margin-right: 2px; }
.sep { width: 1px; height: 16px; flex: none; background: #bbb; }
.caret { display: inline-block; flex: none; width: 0; height: 0; border: 3px solid transparent; border-top: 3px solid #111; border-bottom: 0; }
.caret.gray { border-top-color: #999; }
.t { white-space: nowrap; }
.gear { margin-left: 2px; }
.prop-on { display: flex; align-items: center; gap: 4px; width: 75px; height: 23px; padding-left: 3px; border: 1px solid #1f80c8; background: #e6f1f9; flex: none; margin: 0 0 0 -1px; }
.multi { margin-right: -1px; }
.cb-mini { width: 10px; height: 10px; border: 1px solid #888; background: #fff; margin: 0 4px; flex: none; }
.navs { flex: none; margin-left: 2px; }
.fx { font: italic bold 13px "Liberation Serif", serif; }
.pil { font: bold 15px "Liberation Sans", sans-serif; margin: 0 4px 0 3px; }
.seg-d .ic-calc { margin-left: -4px; }
.screen { margin-left: -4px; }
.lst { margin-left: -5px; }
.seg-d .sep { margin-left: -2px; }
.back { margin-left: -2px; }

.main { flex: 1; display: flex; min-height: 0; }

/* left rail */
.rail { width: 25px; flex: none; padding-top: 9px; overflow: hidden; position: relative; border-right: 1px solid #777; }
.vtab { position: relative; width: 24px; background: #8a8a8a; margin-bottom: -5px; clip-path: polygon(0 12px, 100% 0, 100% 100%, 0 calc(100% - 8px)); display: flex; justify-content: center; padding-top: 15px; }
.vtab::before { content: ""; position: absolute; inset: 1px 0 1px 1px; background: #fff; clip-path: polygon(0 12px, 100% 0, 100% 100%, 0 calc(100% - 8px)); }
.vtab.on::before { background: #f0f0f0; }
.vtab span { position: relative; writing-mode: vertical-lr; text-orientation: upright; font-size: 13px; line-height: 16px; color: #111; }
.vtab.on span { font-weight: 700; }
.vtab.p12 { padding-top: 12px; }
.h82 { height: 82px; } .h83 { height: 83px; } .h84 { height: 84px; } .h85 { height: 85px; } .h93 { height: 93px; } .h57 { height: 57px; }
.rail-arrows { position: absolute; left: 0; bottom: 2px; display: flex; background: #f0f0f0; }
.ra { width: 11px; height: 11px; font-size: 8px; line-height: 11px; text-align: center; background: #222; color: #fff; font-weight: 400; }
.ra.off { background: #ddd; color: #999; }

/* left side panel */
.side { width: 155px; flex: none; display: flex; flex-direction: column; padding: 2px 0 0 4px; }
.side-head { height: 22px; display: flex; align-items: center; justify-content: space-between; padding: 0 9px 0 38px; font-size: 12px; flex: none; }
.side-box { height: 583px; margin-top: 2px; border: 1px solid #9a9a9a; background: #fff; display: flex; flex-direction: column; flex: none; }
.side-tree { flex: 1; padding: 1px 0 0 5px; overflow: hidden; }
.st { height: 14px; line-height: 14px; white-space: nowrap; padding-left: 20px; position: relative; }
.st.root { padding-left: 0; }
.st:not(.root)::before { content: ""; position: absolute; left: 8px; top: 7px; width: 9px; border-top: 1px dotted #666; }
.st:not(.root)::after { content: ""; position: absolute; left: 8px; top: -7px; height: 14px; border-left: 1px dotted #666; }
.st-sel { background: #d9d9d9; display: inline-block; width: 80px; margin-left: -4px; padding-left: 4px; }
.hs { height: 17px; background: #f0f0f0; display: flex; align-items: center; justify-content: space-between; flex: none; position: relative; padding: 0 6px; }
.thumb { background: #cdcdcd; display: block; }
.side-hs .th-side { position: absolute; left: 18px; width: 84px; height: 15px; }
.side-tabs { height: 19px; display: flex; padding-left: 9px; flex: none; background: repeating-conic-gradient(#e6e6e6 0 25%, #f6f6f6 0 50%) 0 0 / 2px 2px; }
.stab { position: relative; height: 17px; background: #777; clip-path: polygon(0 0, 100% 0, calc(100% - 5px) 100%, 5px 100%); text-align: center; line-height: 15px; flex: none; }
.stab::before { content: ""; position: absolute; inset: 0 1px 1px; background: #fff; clip-path: polygon(0 0, 100% 0, calc(100% - 5px) 100%, 5px 100%); }
.stab span { position: relative; }
.s44 { width: 44px; } .s48 { width: 48px; }
.splitter { width: 6px; flex: none; position: relative; }
.splitter i { position: absolute; left: 0; top: 262px; width: 6px; height: 16px; border: 1px solid #999; }

/* chevrons */
.chev { display: inline-block; width: 6px; height: 6px; border: solid #666; border-width: 2px 0 0 2px; flex: none; }
.chev.l { transform: rotate(-45deg); }
.chev.r { transform: rotate(135deg); }
.chev.u { transform: rotate(45deg); }
.chev.d { transform: rotate(225deg); }

/* right work area */
.work { flex: 1; min-width: 0; display: flex; flex-direction: column; padding-left: 1px; }
.toolbar2 { height: 23px; width: 1021px; background: #f6f6f6; display: flex; align-items: center; padding-left: 4px; flex: none; position: relative; }
.ti { display: flex; align-items: center; gap: 9px; white-space: nowrap; flex: none; }
.ti.tight { gap: 3px; }
.toolbar2 > .grip { margin-right: 6px; }
.w40 { width: 40px; } .w42 { width: 42px; } .w44 { width: 44px; } .w46 { width: 46px; } .w53 { width: 53px; } .w66 { width: 66px; } .w68 { width: 68px; } .w70 { width: 70px; }
.sep2 { margin: 0 7px; }
.treeic { margin-right: 4px; }
.toolbar2 .ic-arrow { margin-right: 10px; }
.lockbox { width: 99px; height: 21px; line-height: 19px; border: 1px solid #1f80c8; background: #e6f1f9; text-align: right; padding-right: 4px; flex: none; white-space: nowrap; overflow: hidden; }
.c-wide { margin: 0 7px 0 27px; }
.toolbar2 > .sep:not(.sep2) { margin-right: 6px; }
.gray-t { color: #8a8a8a; margin-left: 0; }

.upper { height: 355px; margin-top: 3px; border: 1px solid #a8a8a8; flex: none; display: flex; flex-direction: column; background: #f0f0f0; }
.grid-area { flex: 1; min-height: 0; display: flex; overflow: hidden; }
.grid { border-collapse: collapse; table-layout: fixed; flex: none; height: fit-content; background: #fff; }
.grid th, .grid td { border: 1px solid #c0c0c0; padding: 0 3px; overflow: hidden; white-space: nowrap; }
.grid th { font-weight: 400; text-align: center; background: linear-gradient(#fafafa, #dfdfdf); height: 21px; }
.grid th.hot { background: linear-gradient(#fbe3ad, #f2c16a); }
.grid .rh { background: #f0f0f0; text-align: center; padding: 0; }
.grid .rh.hotrow { background: #fdd28a; }
.ra-t { text-align: right; }
.ra-h { text-align: right !important; padding-right: 9px !important; }
.ct { text-align: center; }
.blue { color: #0000ff; font-weight: 700; }
.g-main { width: 1157px; }
.vs { width: 20px; flex: none; display: flex; flex-direction: column; align-items: center; background: #f0f0f0; position: relative; padding-top: 6px; }
.vs .chev.d { position: absolute; bottom: 8px; left: 7px; }
.vs-main .thumb { width: 17px; height: 17px; margin-top: 3px; }
.r19 { height: 19px; } .r174 { height: 174px; } .r20 { height: 20px; } .r28 { height: 28px; } .r29 { height: 29px; }
.tint td { background: #dff3fe; }
.sel td { background: #a8dbfa; }
.pm { display: inline-block; width: 14px; height: 14px; line-height: 12px; border: 1px solid #999; background: #eee; text-align: center; margin-left: -1px; }
.main-hs { justify-content: space-between; padding-right: 26px; border-top: 0; height: 18px; }

.c22 { width: 22px; } .c23 { width: 23px; } .c34 { width: 34px; } .c37 { width: 37px; } .c40 { width: 40px; } .c41 { width: 41px; } .c42 { width: 42px; } .c49 { width: 49px; } .c50 { width: 50px; } .c56 { width: 56px; } .c58 { width: 58px; } .c63 { width: 63px; } .c65 { width: 65px; } .c74 { width: 74px; } .c75 { width: 75px; } .c78 { width: 78px; } .c80 { width: 80px; } .c81 { width: 81px; } .c82 { width: 82px; } .c97 { width: 97px; } .c119 { width: 119px; } .c125 { width: 125px; } .c128 { width: 128px; } .c228 { width: 228px; } .c267 { width: 267px; }

.lower-tabs { height: 22px; margin-top: 8px; flex: none; padding-left: 1px; display: flex; align-items: flex-end; }
.ltab { height: 21px; line-height: 20px; padding: 0 4px; border: 1px solid #999; border-bottom: 0; background: #fff; white-space: nowrap; }
.lower { flex: 1; display: flex; min-height: 0; }
.lower-box { width: 1050px; height: 216px; border: 1px solid #a8a8a8; display: flex; flex-direction: column; flex: none; background: #f0f0f0; }
.g-low { width: 1032px; }
.g-low th { height: 21px; }
.g-low tr.low { height: 19px; }
.code { padding-left: 20px !important; }
.tintcell { background: #dff1fc; }
.clip { text-align: left !important; padding: 0 !important; }
.cb { display: block; width: 14px; height: 14px; border: 1px solid #444; background: #fff; margin: 0 auto; }
.vs-low { width: 16px; padding-top: 3px; }
.vs-low .thumb { width: 15px; height: 16px; margin-top: 3px; }
.low-hs { height: 18px; padding-right: 18px; }
.th-lowh { position: absolute; left: 18px; width: 17px; height: 15px; }

.actions { flex: 1; padding: 4px 0 0 12px; display: flex; flex-direction: column; }
.btn { font: 12px/16px "Noto Sans CJK SC", sans-serif; color: #111; background: #e1e1e1; border: 1px solid #adadad; padding: 0; cursor: default; }
.btn-row { display: flex; gap: 6px; margin-bottom: 6px; align-items: flex-start; }
.btn-row.first { padding-left: 1px; margin-bottom: 5px; }
.btn-row.first .half + .half { margin-top: 1px; }
.half { width: 48px; height: 23px; }
.wide { width: 103px; height: 23px; margin-bottom: 6px; }
.filter { margin: -3px 0 0 -4px; padding: 8px 0 0 0; width: 115px; height: 99px; border: 1px solid #d8d8d8; display: grid; grid-template-columns: 67px 1fr; grid-auto-rows: 23px; align-items: center; }
.filter legend { padding: 0 2px; margin-left: 7px; line-height: 14px; }
.rad, .rad2 { display: flex; align-items: center; gap: 2px; white-space: nowrap; }
.dot { display: block; width: 13px; height: 13px; border: 1px solid #333; border-radius: 50%; background: #fff; position: relative; flex: none; }
.dot.on::after { content: ""; position: absolute; inset: 2px; background: #222; border-radius: 50%; }
.dot.soft { border-color: #aaa; width: 11px; height: 11px; }

/* status */
.status { height: 20px; display: flex; gap: 3px; flex: none; padding-top: 1px; }
.sc { height: 19px; line-height: 18px; border: 1px solid #dcdcdc; background: #f4f4f4; padding-left: 1px; white-space: nowrap; overflow: hidden; flex: none; }
.s1 { width: 372px; } .s2 { width: 372px; } .s3 { width: 223px; } .s4 { width: 198px; } .s5 { width: 187px; }

/* taskbar */
.taskbar { height: 41px; background: #021016; display: flex; align-items: center; flex: none; color: #fff; }
.start { width: 48px; height: 41px; background: #000; display: flex; align-items: center; justify-content: center; flex: none; }
.search { width: 344px; height: 41px; background: #333; display: flex; align-items: center; padding-left: 10px; flex: none; position: relative; }
.cortana { width: 20px; height: 20px; border: 3px solid #e0e0e0; border-radius: 50%; flex: none; margin-right: 6px; }
.search-t { font-size: 14px; color: #9a9a9a; white-space: nowrap; }
.mic { position: absolute; left: 317px; top: 12px; }
.tk { width: 49px; height: 41px; display: flex; align-items: center; justify-content: center; flex: none; }
.tk.run { box-shadow: inset 0 -2px 0 #76b9ed; clip-path: inset(0 5px); }
.gap5 { margin-left: 5px; }
.tk.active { background: #3a4146; border-bottom: 2px solid #76b9ed; margin-left: 0; }
.tray { flex: 1; height: 41px; display: flex; align-items: center; position: relative; padding-left: 74px; gap: 8px; }
.cpu { display: flex; flex-direction: column; align-items: center; width: 60px; line-height: 17px; margin-right: 5px; flex: none; }
.tray-zh { font-size: 14px; font-weight: 700; margin: 0 2px; }
.tray-s { margin-left: 4px; }
.clock { display: flex; flex-direction: column; align-items: center; line-height: 17px; margin-left: 8px; width: 60px; flex: none; }
.notif { position: relative; margin-left: 11px; }
.badge { position: absolute; left: 6px; top: 8px; width: 16px; height: 16px; line-height: 14px; border-radius: 50%; background: #222; border: 1px solid #999; text-align: center; font-size: 11px; }

/* overlays */
.ime { position: absolute; left: 664px; top: 34px; width: 183px; height: 24px; background: #eef4fb; border: 1px solid #c8d6e4; display: flex; align-items: center; padding-left: 27px; }
.ime > svg, .ime > span { width: 22px; flex: none; text-align: center; }
.ime > .ime-s { position: absolute; left: -2px; top: -5px; width: 28px; }
.ime-zh { color: #1c78c8; font-size: 15px; font-weight: 700; }
.ime-pt { color: #1c78c8; font-weight: 700; }

.meter { position: absolute; left: 930px; top: 54px; width: 104px; height: 39px; border: 1px solid #c0c0c0; border-left: 0; border-radius: 0 20px 20px 0; background: #f4f4f4; box-shadow: 1px 2px 4px rgba(0,0,0,.25); display: flex; align-items: center; padding-left: 27px; }
.gauge { position: absolute; left: -23px; top: -6px; width: 47px; height: 47px; border-radius: 50%; border: 2px solid #cfd6cf; background: linear-gradient(#1f6f41 0 22%, #3fbf5e 50%, #1f9e4b); color: #fff; text-align: center; font: 400 16px/43px "Liberation Sans", sans-serif; box-shadow: 0 2px 4px rgba(0,0,0,.4); }
.rates { display: flex; flex-direction: column; gap: 1px; width: 48px; }
.rate { display: flex; justify-content: space-between; align-items: center; font: 10px/14px "Liberation Sans", sans-serif; }
.plus { position: relative; width: 17px; height: 17px; margin-left: 4px; border-radius: 50%; background: #2f78d8; color: #fff; text-align: center; font: 700 15px/17px "Liberation Sans", sans-serif; }
.reddot { position: absolute; right: -3px; top: -3px; width: 8px; height: 8px; border-radius: 50%; background: #e0262c; }

.dialog { position: absolute; left: 238px; top: 125px; width: 852px; height: 515px; background: #f0f0f0; border: 1px solid #4a98e4; box-shadow: 2px 4px 20px rgba(0,0,0,.35); display: flex; flex-direction: column; }
.dlg-title { height: 29px; background: #fff; display: flex; align-items: center; padding-left: 8px; gap: 5px; flex: none; }
.dlg-caps { margin-left: auto; display: flex; gap: 37px; padding-right: 16px; }
.dlg-tabs { height: 29px; display: flex; align-items: flex-start; flex: none; position: relative; padding: 2px 0 0 1px; }
.dt-t { height: 20px; line-height: 20px; border-right: 1px solid #aaa; flex: none; padding: 0 10px 0 7px; white-space: nowrap; }
.t-b { padding: 0 12px 0 11px; }
.dt-t.on { margin: 0 5px 0 9px; width: 41px; padding: 0; text-align: center; border: 1px solid #777; border-right-color: #ddd; border-bottom-color: #ddd; background: #fafafa; }
.t-c { padding: 0 10px 0 5px; border-left: 1px solid #aaa; padding-left: 11px; }
.t-d { padding: 0 11px; }
.dlg-btns { position: absolute; right: 1px; top: 7px; display: flex; gap: 4px; }
.dbtn { width: 73px; height: 23px; }
.dbtn + .dbtn { width: 68px; }
.dlg-body { flex: 1; display: flex; min-height: 0; }
.dlg-left { width: 219px; flex: none; padding-left: 1px; display: flex; flex-direction: column; }
.combo { width: 215px; height: 20px; line-height: 18px; border: 1px solid #bbb; background: #e4e4e4; padding-left: 3px; display: flex; justify-content: space-between; align-items: center; overflow: hidden; white-space: nowrap; flex: none; }
.combo span { width: 192px; overflow: hidden; }
.combo .chev { margin-right: 6px; width: 5px; height: 5px; border-width: 1px 0 0 1px; transform: rotate(225deg); }
.pagetabs { height: 26px; display: flex; align-items: flex-end; flex: none; }
.pt { width: 55px; height: 22px; line-height: 20px; background: #e8e8e8; border: 1px solid #ddd; text-align: center; flex: none; }
.pt.on { width: 64px; height: 24px; line-height: 18px; background: #f7f7f7; border-bottom: 0; }
.tree-box { margin-left: 3px; width: 208px; height: 367px; border: 1px solid #888; background: #fff; display: flex; flex-direction: column; flex: none; }
.tree-scroll { flex: 1; display: flex; min-height: 0; }
.tree-list { flex: 1; min-width: 0; position: relative; padding-top: 1px; overflow: hidden; }
.dr { height: 16px; line-height: 16px; white-space: nowrap; position: relative; }
.leaf { padding-left: 82px; }
.leaf::before { content: ""; position: absolute; left: 71px; top: 8px; width: 9px; border-top: 1px dotted #666; }
.chap { padding-left: 44px; }
.sec { padding-left: 62px; }
.sec2 { padding-left: 62px; }
.sec2::before { content: ""; position: absolute; left: 52px; top: 8px; width: 9px; border-top: 1px dotted #666; }
.tw { position: absolute; width: 6px; height: 6px; border-color: #888; }
.chap .tw { left: 29px; top: 5px; }
.sec .tw { left: 48px; top: 4px; }
.picked { display: inline-block; width: 104px; background: #cce8ff; margin-left: -4px; padding-left: 4px; }
.vl { position: absolute; top: 0; bottom: 0; border-left: 1px dotted #777; }
.v1 { left: 13px; } .v2 { left: 32px; }
.v3 { left: 52px; top: 84px; }
.v4 { left: 71px; bottom: auto; height: 40px; }
.v5 { left: 71px; top: 96px; bottom: 18px; }
.vs-tree { width: 17px; padding-top: 7px; }
.vs-tree .chev.d { left: 6px; bottom: 4px; }
.vs-tree .chev.u { position: absolute; top: 7px; left: 6px; }
.th-tree { position: absolute; left: 0; top: 87px; width: 16px; height: 92px; }
.tree-hs { height: 18px; padding: 0 10px 0 6px; }
.th-treeh { position: absolute; left: 18px; width: 105px; height: 15px; }
.dlg-radios { display: flex; padding: 10px 0 0 14px; }
.rad2 { width: 64px; gap: 9px; }
.dlg-right { width: 630px; height: 455px; background: #fff; border: 1px solid #a0a0a0; flex: none; overflow: hidden; padding-top: 1px; }
.g-dlg { width: 554px; margin: 0; word-spacing: 3.3px; }
.g-dlg th { height: 20px; }
.g-dlg tr { height: 19px; }
.g-dlg tr.tall { height: 29px; }
.g-dlg td { padding: 0 3px 0 1px; }
.g-dlg .wrap { white-space: normal; line-height: 12px; padding: 0 3px 0 1px; }

.redbox { position: absolute; border: 3px solid #f40000; pointer-events: none; }
.rb-tree { left: 298px; top: 311px; width: 134px; height: 47px; }
.rb-row { left: 452px; top: 257px; width: 356px; height: 33px; }
```
